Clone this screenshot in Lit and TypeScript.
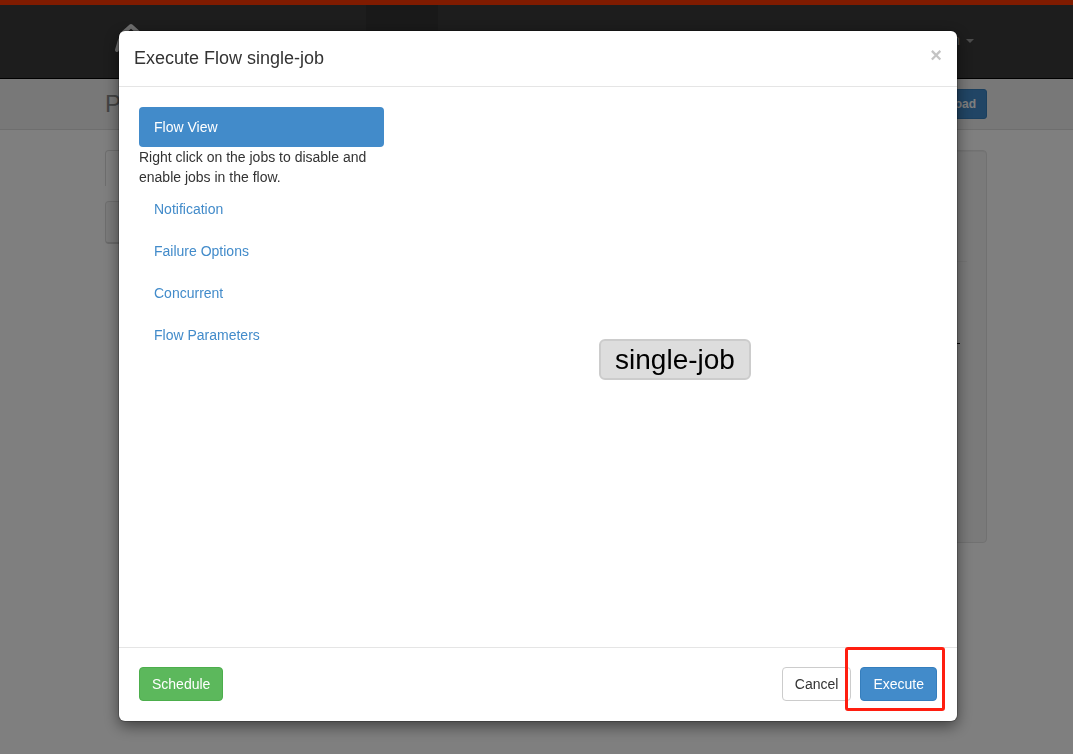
import { LitElement, html, css } from "lit";
import { customElement, property, state } from "lit/decorators.js";

@customElement("flow-page")
class FlowPage extends LitElement {
  static styles = css`
    :host {
      display: block;
      color: #333;
      font: 14px/20px "Liberation Sans", Arial, sans-serif;
    }
    * {
      box-sizing: border-box;
    }
    a {
      color: inherit;
      text-decoration: none;
    }
    .navbar {
      height: 79px;
      border-top: 5px solid #ff3600;
      border-bottom: 1px solid #000;
      background: #3a3a3a;
    }
    .container {
      display: flex;
      width: 100%;
      max-width: 901px;
      margin: 0 auto;
      padding-left: 19px;
    }
    .navbar .container {
      height: 100%;
      align-items: center;
    }
    .logo {
      width: 40px;
      height: 40px;
      margin-left: 6px;
    }
    .current {
      align-self: stretch;
      width: 72px;
      margin-left: 215px;
      background: #333;
    }
    .user {
      display: flex;
      align-items: center;
      gap: 6px;
      margin-left: auto;
      margin-right: 13px;
      padding-bottom: 4px;
      color: #999;
    }
    .caret {
      margin-top: 2px;
      border: 4px solid transparent;
      border-top-color: #999;
      border-bottom: 0;
    }
    .page-header {
      height: 51px;
      background: #f1f1f1;
      border-bottom: 1px solid #dcdcdc;
    }
    .page-header .container {
      height: 100%;
      align-items: center;
      justify-content: space-between;
    }
    h1 {
      margin: 0;
      font-size: 24px;
      line-height: 30px;
      font-weight: 400;
      color: #888;
    }
    .upload {
      height: 30px;
      padding: 0 10px;
      border: 1px solid #357ebd;
      border-radius: 3px;
      background: #428bca;
      color: #fff;
      font: bold 12px/18px "Liberation Sans", Arial, sans-serif;
    }
    .content {
      gap: 30px;
      padding-top: 20px;
    }
    .flows {
      flex: 3;
    }
    .tab {
      width: 100px;
      height: 36px;
      border: 1px solid #ddd;
      border-bottom: 0;
      border-radius: 4px 4px 0 0;
    }
    .row {
      height: 43px;
      margin-top: 15px;
      border: 1px solid #ddd;
      border-bottom: 2px solid #d4d4d4;
      border-radius: 4px;
      background: #f5f5f5;
    }
    .well {
      flex: 1;
      height: 393px;
      padding: 110px 19px 0;
      border: 1px solid #e3e3e3;
      border-radius: 4px;
      background: #f5f5f5;
      box-shadow: inset 0 1px 1px rgba(0, 0, 0, 0.05);
    }
    .rule {
      height: 1px;
      background: #eaeaea;
    }
    .mark {
      height: 1px;
      margin: 81px 7px 0 0;
      background: #111;
    }
  `;

  render() {
    return html`
      <header class="navbar">
        <div class="container">
          <svg class="logo" viewBox="0 0 40 40" fill="none" stroke="#ddd" stroke-width="4"
            stroke-linecap="round" stroke-linejoin="round" aria-hidden="true">
            <path d="M11 12 20 4 29 12M9 18 6 28M31 18 34 28" />
          </svg>
          <span class="current"></span>
          <a class="user" href="#">n<span class="caret"></span></a>
        </div>
      </header>
      <div class="page-header">
        <div class="container">
          <h1>Project</h1>
          <button class="upload">Upload</button>
        </div>
      </div>
      <div class="container content">
        <div class="flows">
          <div class="tab"></div>
          <div class="row"></div>
        </div>
        <aside class="well">
          <div class="rule"></div>
          <div class="mark"></div>
        </aside>
      </div>
    `;
  }
}

@customElement("execute-dialog")
class ExecuteDialog extends LitElement {
  @property() flow = "";
  @state() private selected = 0;

  private panels = ["Flow View", "Notification", "Failure Options", "Concurrent", "Flow Parameters"];

  static styles = css`
    :host {
      position: fixed;
      inset: 0;
      display: flex;
      justify-content: center;
      align-items: flex-start;
      padding: 31px 20px 30px 23px;
      background: rgba(0, 0, 0, 0.5);
      color: #333;
      font: 14px/20px "Liberation Sans", Arial, sans-serif;
      overflow: auto;
      box-sizing: border-box;
    }
    * {
      box-sizing: border-box;
    }
    .dialog {
      width: 100%;
      max-width: 838px;
      border-radius: 6px;
      background: #fff;
      box-shadow: 0 0 0 1px rgba(0, 0, 0, 0.2), 0 5px 15px rgba(0, 0, 0, 0.5);
    }
    .head {
      display: flex;
      justify-content: space-between;
      align-items: flex-start;
      padding: 15px;
      border-bottom: 1px solid #e5e5e5;
    }
    h2 {
      margin: 0;
      font-size: 18px;
      line-height: 25px;
      font-weight: 400;
    }
    .close {
      padding: 0;
      border: 0;
      background: none;
      color: #c4c4c4;
      font: bold 20px/18px "Liberation Sans", Arial, sans-serif;
    }
    .body {
      display: grid;
      grid-template-columns: 245px 1fr;
      gap: 29px;
      min-height: 560px;
      padding: 20px;
    }
    ul {
      display: flex;
      flex-direction: column;
      gap: 2px;
      margin: 0;
      padding: 0;
      list-style: none;
    }
    .option {
      display: block;
      padding: 10px 15px;
      border-radius: 4px;
      color: #428bca;
      text-decoration: none;
    }
    .option.active {
      background: #428bca;
      color: #fff;
    }
    p {
      margin: 0;
    }
    .canvas {
      display: grid;
      place-items: center;
      padding-bottom: 15px;
    }
    .node {
      padding: 2px 14px;
      border: 2px solid #ccc;
      border-radius: 6px;
      background: #ddd;
      color: #000;
      font-size: 28px;
      line-height: 33px;
    }
    .foot {
      display: flex;
      gap: 9px;
      padding: 19px 20px 20px;
      border-top: 1px solid #e5e5e5;
    }
    .btn {
      padding: 6px 12px;
      border: 1px solid #ccc;
      border-radius: 4px;
      background: #fff;
      color: #333;
      font: inherit;
    }
    .success {
      margin-right: auto;
      border-color: #4cae4c;
      background: #5cb85c;
      color: #fff;
    }
    .primary {
      border-color: #357ebd;
      background: #428bca;
      color: #fff;
    }
    .highlight {
      position: relative;
    }
    .highlight::after {
      content: "";
      position: absolute;
      inset: -20px -8px -10px -15px;
      border: 3px solid #ff1e10;
      border-radius: 3px;
      pointer-events: none;
    }
  `;

  private select(event: Event, index: number) {
    event.preventDefault();
    this.selected = index;
  }

  render() {
    return html`
      <section class="dialog" role="dialog" aria-labelledby="title">
        <header class="head">
          <h2 id="title">Execute Flow ${this.flow}</h2>
          <button class="close" aria-label="Close">×</button>
        </header>
        <div class="body">
          <ul>
            ${this.panels.map(
              (name, i) => html`<li>
                <a class="option ${i === this.selected ? "active" : ""}" href="#"
                  @click=${(e: Event) => this.select(e, i)}>${name}</a>
                ${i === 0 && this.selected === 0
                  ? html`<p>Right click on the jobs to disable and enable jobs in the flow.</p>`
                  : ""}
              </li>`
            )}
          </ul>
          <div class="canvas"><div class="node">${this.flow}</div></div>
        </div>
        <footer class="foot">
          <button class="btn success">Schedule</button>
          <button class="btn">Cancel</button>
          <div class="highlight"><button class="btn primary">Execute</button></div>
        </footer>
      </section>
    `;
  }
}

@customElement("app-root")
class AppRoot extends LitElement {
  static styles = css`
    :host {
      display: block;
      min-height: 100vh;
      background: #fff;
    }
  `;

  render() {
    return html`
      <flow-page></flow-page>
      <execute-dialog flow="single-job"></execute-dialog>
    `;
  }
}
